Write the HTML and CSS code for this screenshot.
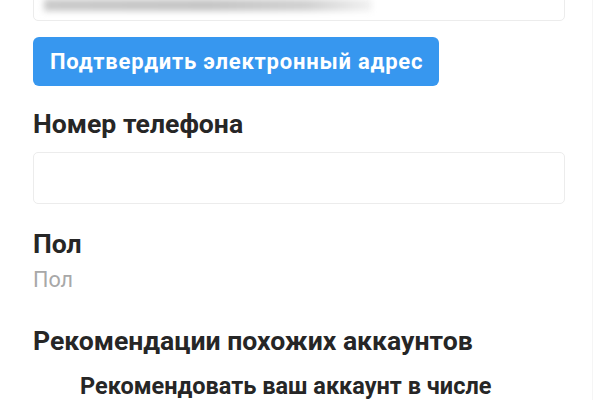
FILE: index.html
```html
<!DOCTYPE html>
<html lang="ru">
<head>
<meta charset="utf-8">
<link rel="stylesheet" href="styles.css">
</head>
<body>
<div class="page">
  <div class="field field-email">
    <div class="blurred"></div>
  </div>
  <button class="confirm">Подтвердить электронный адрес</button>
  <div class="label label-phone">Номер телефона</div>
  <div class="field field-phone"></div>
  <div class="label label-gender">Пол</div>
  <div class="placeholder">Пол</div>
  <div class="label label-rec">Рекомендации похожих аккаунтов</div>
  <div class="rec-row">
    <span class="rec-text">Рекомендовать ваш аккаунт в числе</span>
  </div>
</div>
</body>
</html>
```

FILE: styles.css
```css
html, body {
  margin: 0;
  padding: 0;
  background: #ffffff;
  overflow: hidden;
}
.page {
  box-sizing: border-box;
  width: 593px;
  height: 400px;
  padding: 0 27px 0 33px;
  border-right: 1px solid #f5f5f5;
  font-family: Roboto, "Noto Sans", sans-serif;
  color: #262626;
  display: flex;
  flex-direction: column;
  align-items: flex-start;
}
.field {
  box-sizing: border-box;
  width: 532px;
  border: 1px solid #ececec;
  border-radius: 5px;
  background: #fff;
  flex-shrink: 0;
}
.field-email {
  height: 52px;
  margin-top: -31px;
  display: flex;
  align-items: flex-end;
  padding: 0 0 9px 10px;
}
.blurred {
  width: 328px;
  height: 12px;
  background: linear-gradient(90deg, #c9c9c9 0%, #c4c4c4 50%, #d0d0d0 80%, #f2f2f2 100%);
  filter: blur(3px);
}
.confirm {
  margin-top: 16px;
  height: 49px;
  flex-shrink: 0;
  padding: 0 16px 0 17px;
  border: none;
  border-radius: 6px;
  background: #3797ef;
  color: #ffffff;
  font-family: Roboto, "Noto Sans", sans-serif;
  font-weight: 700;
  font-size: 22px;
  letter-spacing: 0.8px;
}
.label {
  font-weight: 700;
  font-size: 26.6px;
  line-height: 30px;
  flex-shrink: 0;
}
.label-phone {
  margin-top: 23px;
}
.field-phone {
  height: 52px;
  margin-top: 13px;
}
.label-gender {
  margin-top: 25px;
}
.placeholder {
  margin-top: 8px;
  font-size: 21.6px;
  line-height: 26px;
  color: #a8a8a8;
  flex-shrink: 0;
}
.label-rec {
  margin-top: 33px;
}
.rec-row {
  align-self: stretch;
  margin-top: 16px;
  padding-left: 47px;
  flex-shrink: 0;
}
.rec-text {
  font-weight: 700;
  font-size: 23.5px;
  line-height: 28px;
}
```
